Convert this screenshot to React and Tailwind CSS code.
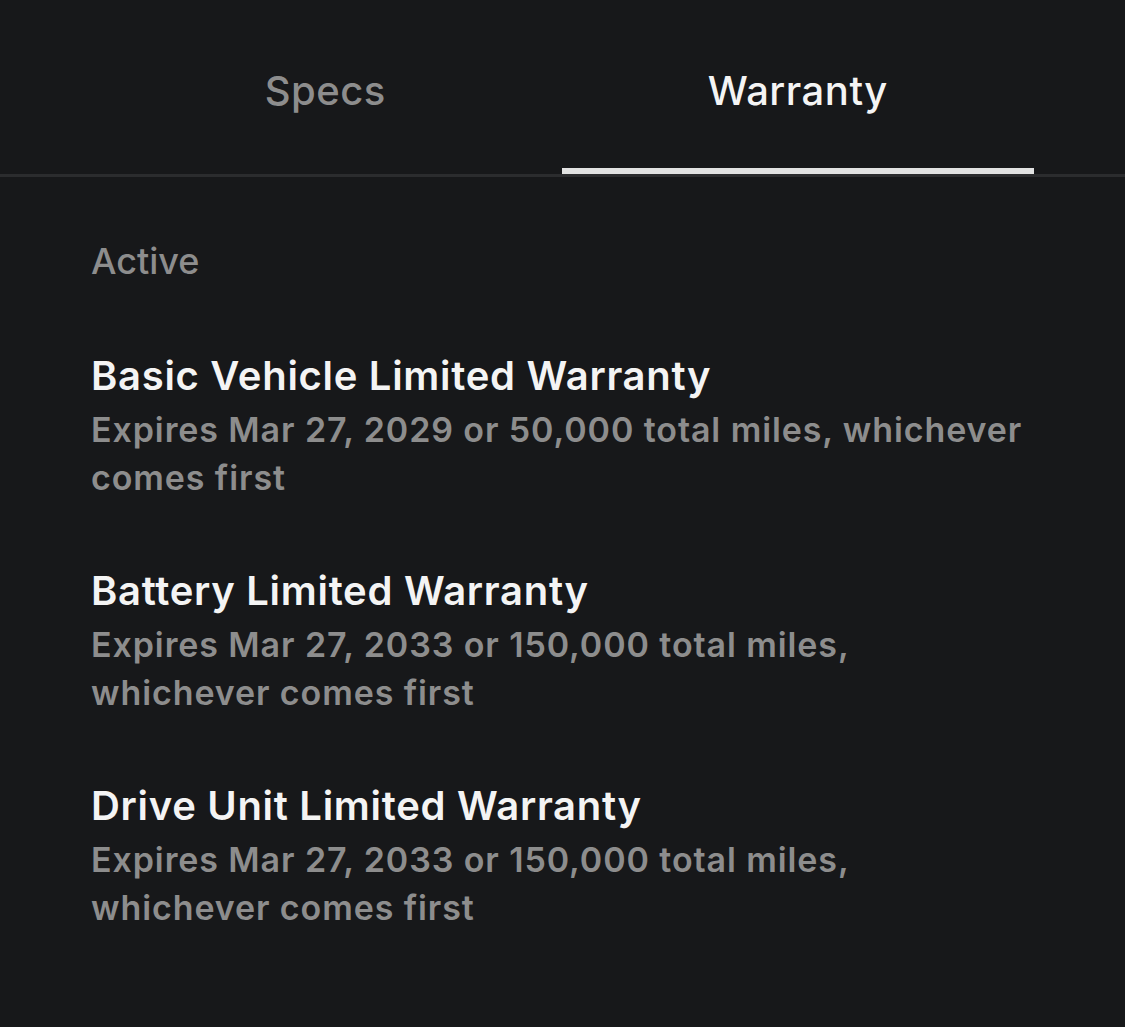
export default function App() {
  const items = [
    { t: "Basic Vehicle Limited Warranty", s: "Expires Mar 27, 2029 or 50,000 total miles, whichever comes first" },
    { t: "Battery Limited Warranty", s: "Expires Mar 27, 2033 or 150,000 total miles, whichever comes first" },
    { t: "Drive Unit Limited Warranty", s: "Expires Mar 27, 2033 or 150,000 total miles, whichever comes first" },
  ];
  return (
    <div className="w-[1125px] h-[1027px] bg-[#17181a] overflow-hidden" style={{ fontFamily: "Inter, 'Noto Sans', sans-serif" }}>
      <div className="border-b-[3px] border-[#2b2c2e]">
        <div className="flex ml-[89px] w-[945px]">
          <div className="flex-1 h-[174px] flex items-center justify-center">
            <span className="text-[40px] font-medium tracking-[0.5px] text-[#8d8d8d] pt-[8px]">Specs</span>
          </div>
          <div className="flex-1 h-[174px] flex items-center justify-center relative">
            <span className="text-[40px] font-medium tracking-[0.5px] text-[#f4f4f4] pt-[8px]">Warranty</span>
            <div className="absolute left-0 right-0 bottom-0 h-[6px] bg-[#e2e2e2]" />
          </div>
        </div>
      </div>
      <div className="pl-[91px] pt-[62px] flex flex-col">
        <div className="text-[36px] leading-[44px] font-medium text-[#8d8d8d]">Active</div>
        <div className="flex flex-col gap-[63px] mt-[67px] w-[940px]">
          {items.map((it) => (
            <div key={it.t} className="flex flex-col">
              <div className="text-[40px] leading-[52px] font-semibold tracking-[0.7px] text-[#f4f4f4]">{it.t}</div>
              <div className="text-[34px] leading-[48px] font-semibold tracking-[0.9px] text-[#8d8d8d] mt-[4px]">{it.s}</div>
            </div>
          ))}
        </div>
      </div>
    </div>
  );
}
